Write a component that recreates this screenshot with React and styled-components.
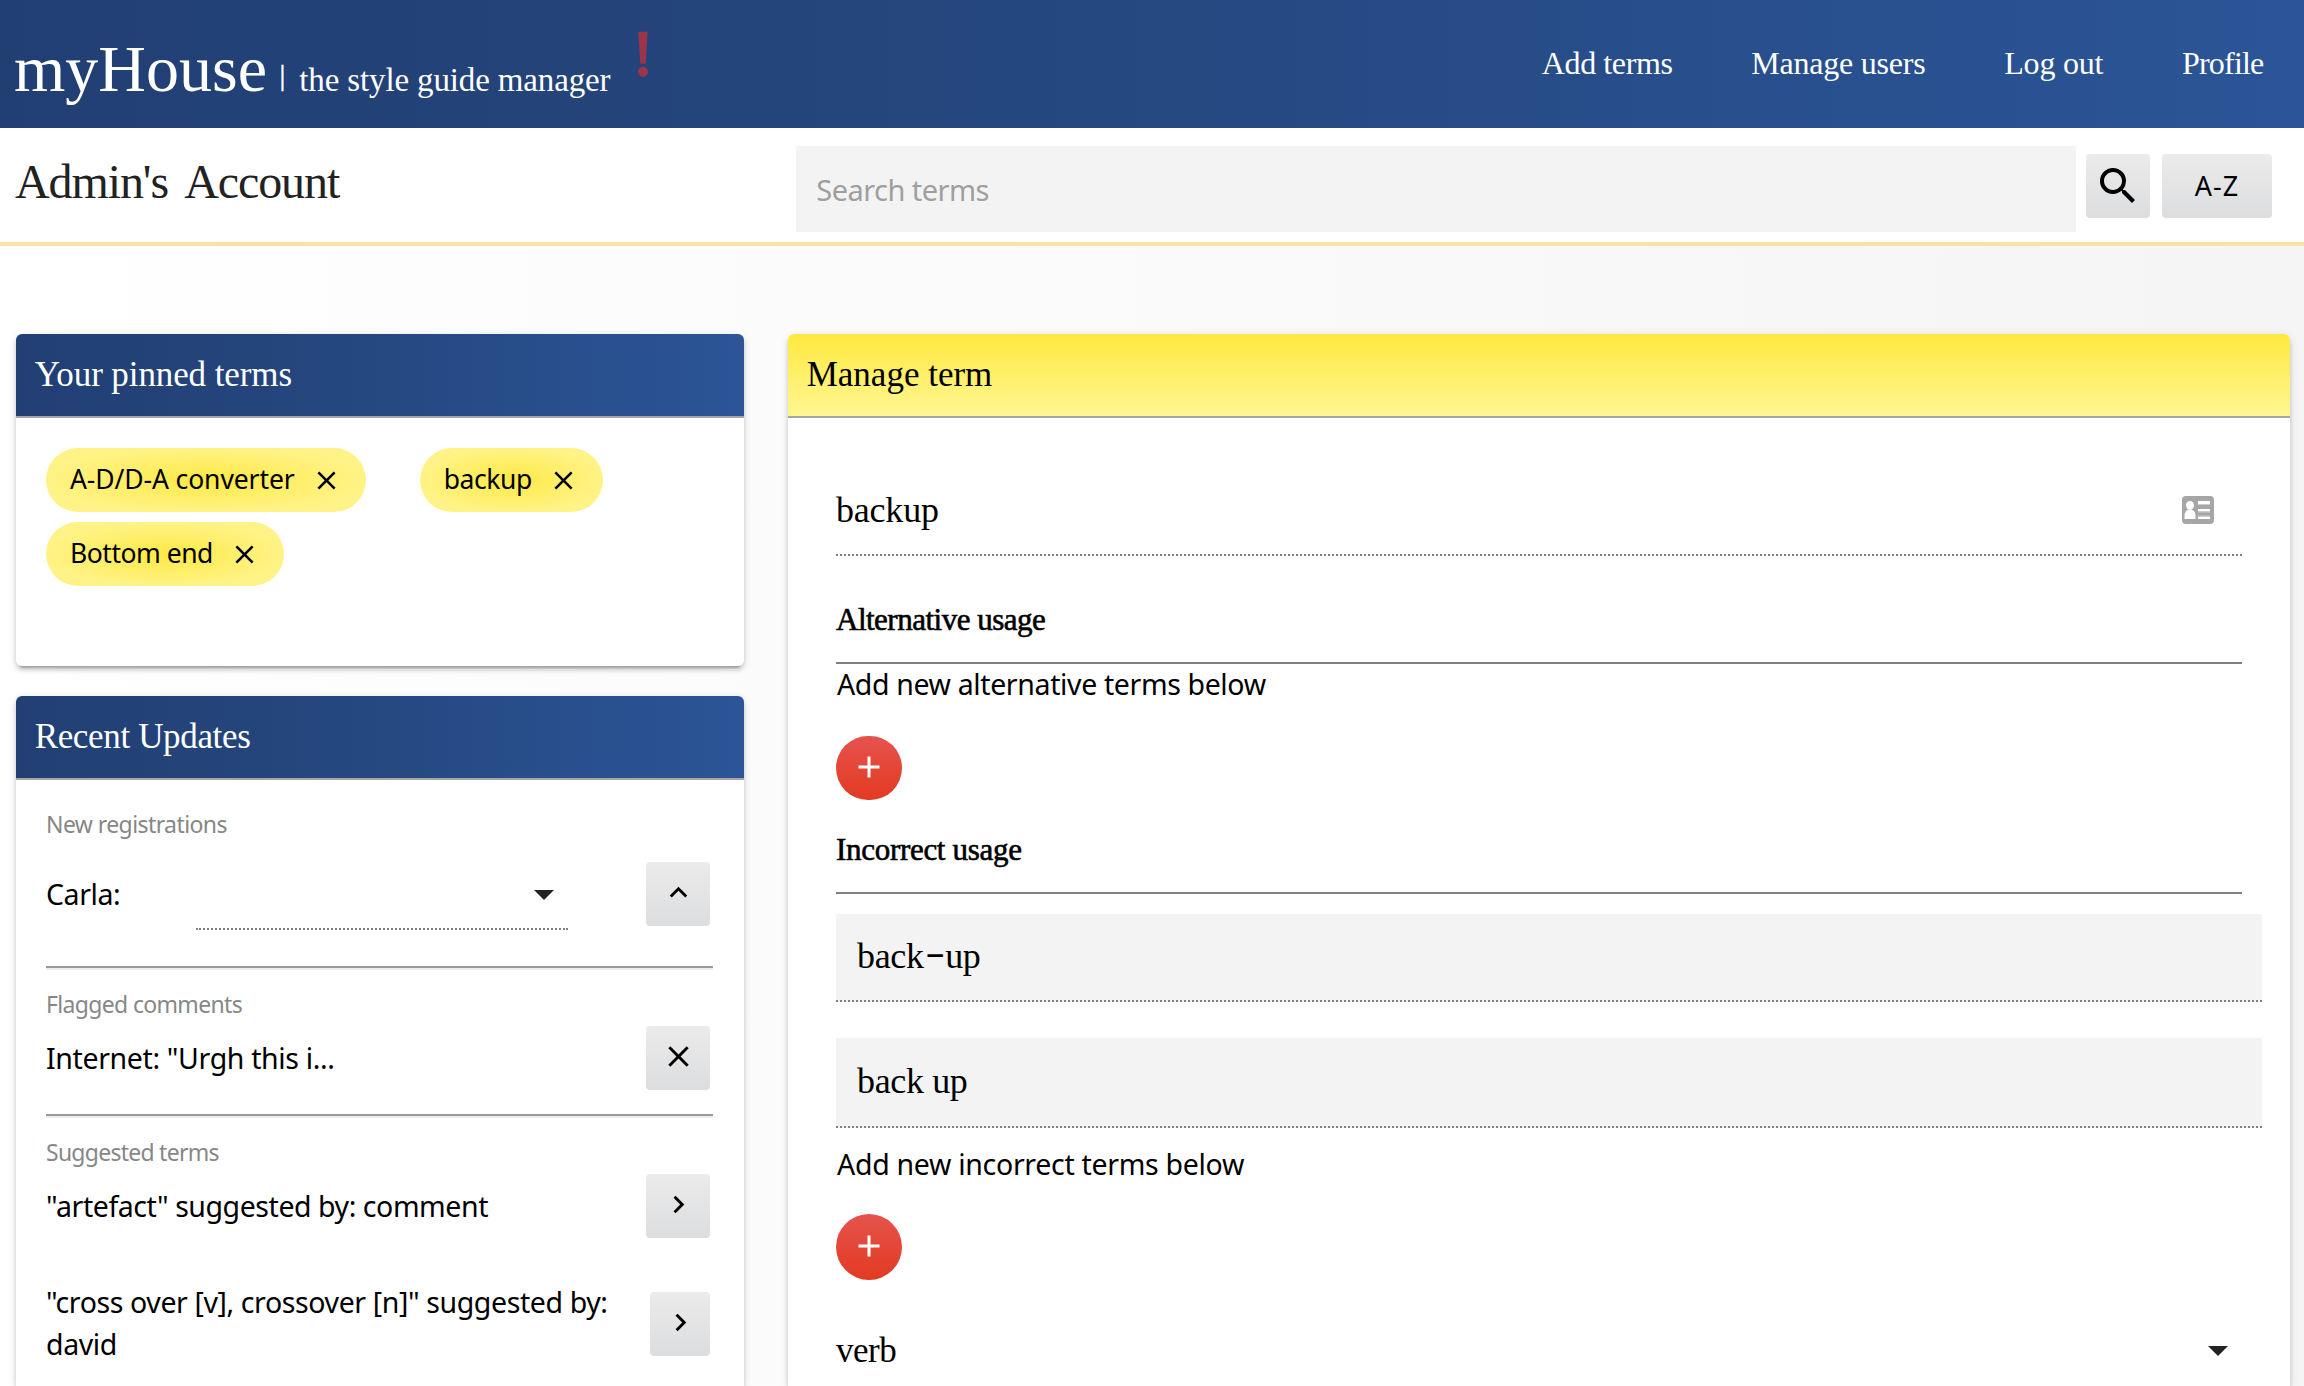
import React from "react";
import styled, { createGlobalStyle } from "styled-components";
import {
  MdAdd,
  MdClose,
  MdKeyboardArrowRight,
  MdKeyboardArrowUp,
  MdSearch,
} from "react-icons/md";

const serif = `"Liberation Serif", "Times New Roman", serif`;
const sans = `"Noto Sans", "Open Sans", sans-serif`;
const blue = "linear-gradient(to right, #213f73, #25477f 45%, #2b5597)";
const shadow =
  "0 6px 2px -4px rgba(0,0,0,.2), 0 4px 4px 0 rgba(0,0,0,.14), 0 2px 10px 0 rgba(0,0,0,.12)";

const GlobalStyle = createGlobalStyle`
  *, *::before, *::after { box-sizing: border-box; }
  body { margin: 0; background: #fff; overflow: hidden; }
`;

const Page = styled.div`
  display: flex;
  flex-direction: column;
  width: 100%;
  height: 1386px;
  overflow: hidden;
  color: #000;
  font-family: ${sans};
  font-weight: 400;
`;

/* ---------- top bar ---------- */

const TopBar = styled.header`
  flex: none;
  display: flex;
  align-items: flex-start;
  height: 128px;
  padding: 0 40.5px 0 14px;
  background: ${blue};
  color: #fff;
  font-family: ${serif};
`;

const Brand = styled.div`
  display: flex;
  align-items: baseline;
  padding-top: 29px;
  white-space: nowrap;
`;

const Logo = styled.span`
  font-size: 66px;
  line-height: 80px;
  letter-spacing: 0;
`;

const Divider = styled.span`
  margin: 0 14px 0 12.5px;
  font-size: 29px;
  line-height: 40px;
  transform: translateY(-6px);
  -webkit-text-stroke: 0.5px #fff;
`;

const Tagline = styled.span`
  font-size: 33px;
  line-height: 40px;
  letter-spacing: -0.14px;
`;

const Alert = styled.span`
  margin-left: 22px;
  padding-top: 14px;
  color: #9b3549;
  font-size: 63px;
  line-height: 80px;
  -webkit-text-stroke: 2.5px #9b3549;
`;

const Nav = styled.nav`
  display: flex;
  gap: 78.7px;
  margin-left: auto;
  font-size: 32px;
  line-height: 126px;
`;

const NavLink = styled.a`
  letter-spacing: ${(p) => p.$track}px;
  white-space: nowrap;
`;

/* ---------- account / search bar ---------- */

const SubBar = styled.div`
  flex: none;
  display: flex;
  align-items: flex-start;
  height: 118px;
  padding: 0 32px 0 15px;
  background: #fff;
  border-bottom: 4px solid #f8e3a2;
`;

const AccountTitle = styled.h1`
  width: 781px;
  margin: 0;
  color: #222;
  font: 400 48px/108px ${serif};
  letter-spacing: -1.1px;
  word-spacing: 8px;
`;

const SearchBox = styled.div`
  flex: 1;
  height: 86px;
  margin: 18px 10px 0 0;
  padding: 1px 0 0 20.3px;
  background: #f3f3f3;
  color: #9f9f9f;
  font-size: 29px;
  line-height: 86px;
  letter-spacing: -0.55px;
`;

const GreyButton = styled.button`
  flex: none;
  display: flex;
  align-items: center;
  justify-content: center;
  width: ${(p) => p.$width || 64}px;
  height: 64px;
  padding: 0 0 ${(p) => p.$lift || 0}px;
  border: 0;
  border-radius: 4px;
  background: linear-gradient(#ebebeb, #dcdddf);
  color: #000;
  font: 400 27px/60px ${sans};
  letter-spacing: 1px;
`;

const SearchActions = styled.div`
  display: flex;
  gap: 12px;
  padding-top: 26px;
`;

/* ---------- cards ---------- */

const Content = styled.main`
  flex: 1;
  display: flex;
  align-items: stretch;
  gap: 44px;
  min-height: 0;
  padding: 88px 14px 0 16px;
  background: linear-gradient(to right, #fff, #f5f5f5);
`;

const SideColumn = styled.div`
  flex: none;
  display: flex;
  flex-direction: column;
  gap: 30px;
  width: 728px;
`;

const Card = styled.section`
  flex: ${(p) => (p.$height ? "none" : 1)};
  min-width: 0;
  height: ${(p) => (p.$height ? `${p.$height}px` : "auto")};
  border-radius: ${(p) => (p.$height ? "6px" : "6px 6px 0 0")};
  background: #fff;
  box-shadow: ${shadow};
`;

const CardHeader = styled.h2`
  height: 84px;
  margin: 0;
  padding-left: 18.7px;
  border-bottom: 2px solid #a6a6a6;
  border-radius: 6px 6px 0 0;
  background: ${(p) =>
    p.$yellow ? "linear-gradient(#ffe93e, #fff693)" : blue};
  color: ${(p) => (p.$yellow ? "#000" : "#fff")};
  font: 400 35px/82px ${serif};
  letter-spacing: ${(p) => p.$track || 0}px;
`;

const Chips = styled.div`
  display: flex;
  flex-wrap: wrap;
  gap: 10px 54px;
  padding: 30px;
`;

const Chip = styled.div`
  display: flex;
  align-items: center;
  height: 64px;
  padding: 0 23.5px 0 24px;
  border-radius: 32px;
  background: radial-gradient(#fde945, #fff387 72%);
  font-size: 26.5px;
  letter-spacing: ${(p) => p.$track}px;
`;

const ChipText = styled.span`
  margin-right: 16.500px;
  padding-bottom: 2.5px;
`;

/* ---------- recent updates ---------- */

const Updates = styled.div`
  padding: 30px 30px 0;
`;

const Label = styled.div`
  height: 28px;
  margin-top: ${(p) => p.$top || 0}px;
  color: #878787;
  font-size: 23px;
  line-height: 28px;
  letter-spacing: ${(p) => p.$track || -0.58}px;
`;

const Rule = styled.hr`
  height: 4px;
  margin: 0 1px 0 0;
  border: 0;
  border-top: 2px solid #9a9a9a;
  background: #eee;
`;

const UpdateRow = styled.div`
  display: flex;
  align-items: ${(p) => (p.$tall ? "center" : "flex-start")};
  justify-content: space-between;
  height: ${(p) => p.$height || 64}px;
  margin: ${(p) => p.$top}px 4px ${(p) => p.$bottom || 0}px 0;
`;

const UpdateText = styled.span`
  align-self: flex-start;
  width: ${(p) => (p.$width ? `${p.$width}px` : "auto")};
  font-size: 28.5px;
  line-height: ${(p) => (p.$tall ? 42 : 64)}px;
  letter-spacing: ${(p) => p.$track || -0.4}px;
`;

const RoleSelect = styled.div`
  display: flex;
  align-items: center;
  justify-content: flex-end;
  width: 372px;
  height: 68px;
  margin-right: 78px;
  padding: 0 14px 0 0;
  border-bottom: 2px dotted #808080;
`;

const Caret = styled.i`
  width: 0;
  height: 0;
  border: solid transparent;
  border-width: 10px 10px 0;
  border-top-color: #222;
`;

/* ---------- term form ---------- */

const Form = styled.div`
  padding: 52px 48px 0;
`;

const TermInput = styled.div`
  display: flex;
  align-items: flex-start;
  justify-content: space-between;
  height: 86px;
  padding-right: 28px;
  border-bottom: 2px dotted #808080;
  font: 400 36px/81px ${serif};
  letter-spacing: -0.2px;
`;

const CardIcon = styled.svg`
  margin-top: 26px;
`;

const FieldTitle = styled.h3`
  height: 68px;
  margin: ${(p) => p.$top}px 0 0;
  border-bottom: 2px solid #808080;
  font: 400 31px/48px ${serif};
  letter-spacing: ${(p) => p.$track}px;
  -webkit-text-stroke: 0.6px #000;
`;

const Hint = styled.p`
  margin: ${(p) => p.$top || 0}px 0 0;
  padding-left: 1px;
  font-size: 28.5px;
  line-height: 40px;
  letter-spacing: ${(p) => p.$track}px;
`;

const AddButton = styled.button`
  display: flex;
  align-items: center;
  justify-content: center;
  width: 66px;
  height: ${(p) => p.$height}px;
  margin-top: ${(p) => p.$top}px;
  padding: 0 0 3px;
  border: 0;
  border-radius: 33px;
  background: linear-gradient(#e6534d, #e23a22);
  color: #fff;
`;

const TermField = styled.div`
  width: 1426px;
  height: ${(p) => p.$height}px;
  margin-top: ${(p) => p.$top}px;
  padding-left: 21px;
  background: #f3f3f3;
  border-bottom: 2px dotted #808080;
  font: 400 36px/${(p) => p.$height - 3}px ${serif};
  letter-spacing: -0.35px;
`;

const WideHyphen = styled.span`
  display: inline-block;
  margin: 0 5px;
  transform: translateY(-4px) scaleX(1.65);
`;

const TypeSelect = styled.div`
  display: flex;
  align-items: center;
  justify-content: space-between;
  height: 80px;
  margin-top: 31px;
  padding-right: 14px;
  font: 400 35px/80px ${serif};
  letter-spacing: -0.5px;
`;

function ContactCardIcon() {
  return (
    <CardIcon width="32" height="28" viewBox="0 0 32 28">
      <rect width="32" height="28" rx="4" fill="#a6a6a6" />
      <ellipse cx="8" cy="9.3" rx="4" ry="4.4" fill="#fff" />
      <path d="M2.5 23v-3c0-4 2-6.5 5.5-6.5s5.5 2.5 5.5 6.5v3z" fill="#fff" />
      <path d="M16 5h12v3H16zM16 13h12v2.5H16zM16 20.5h12V23H16z" fill="#fff" />
      <path d="M16 8h12v1H16zM16 15.5h12v1H16zM16 19.5h12v1H16z" fill="#ccc" />
    </CardIcon>
  );
}

export default function App() {
  return (
    <Page>
      <GlobalStyle />
      <TopBar>
        <Brand>
          <Logo>myHouse</Logo>
          <Divider>|</Divider>
          <Tagline>the style guide manager</Tagline>
        </Brand>
        <Alert>!</Alert>
        <Nav>
          <NavLink $track={-0.4}>Add terms</NavLink>
          <NavLink $track={-0.2}>Manage users</NavLink>
          <NavLink $track={-0.2}>Log out</NavLink>
          <NavLink $track={-0.8}>Profile</NavLink>
        </Nav>
      </TopBar>

      <SubBar>
        <AccountTitle>Admin's Account</AccountTitle>
        <SearchBox>Search terms</SearchBox>
        <SearchActions>
          <GreyButton>
            <MdSearch size={48} />
          </GreyButton>
          <GreyButton $width={110} $lift={1}>
            A-Z
          </GreyButton>
        </SearchActions>
      </SubBar>

      <Content>
        <SideColumn>
          <Card $height={332}>
            <CardHeader $track={-0.1}>Your pinned terms</CardHeader>
            <Chips>
              <Chip $track={-0.1}>
                <ChipText>A-D/D-A converter</ChipText>
                <MdClose size={31} />
              </Chip>
              <Chip $track={-0.4}>
                <ChipText>backup</ChipText>
                <MdClose size={31} />
              </Chip>
              <Chip $track={-0.48}>
                <ChipText>Bottom end</ChipText>
                <MdClose size={31} />
              </Chip>
            </Chips>
          </Card>

          <Card>
            <CardHeader $track={-0.35}>Recent Updates</CardHeader>
            <Updates>
              <Label>New registrations</Label>
              <UpdateRow $top={24} $bottom={40}>
                <UpdateText $width={150}>Carla:</UpdateText>
                <RoleSelect>
                  <Caret />
                </RoleSelect>
                <GreyButton $lift={3}>
                  <MdKeyboardArrowUp size={35} />
                </GreyButton>
              </UpdateRow>
              <Rule />

              <Label $top={20} $track={-0.66}>
                Flagged comments
              </Label>
              <UpdateRow $top={8} $bottom={24}>
                <UpdateText $track={-0.36}>Internet: "Urgh this i...</UpdateText>
                <GreyButton $lift={3}>
                  <MdClose size={35} />
                </GreyButton>
              </UpdateRow>
              <Rule />

              <Label $top={20} $track={-0.74}>
                Suggested terms
              </Label>
              <UpdateRow $top={8}>
                <UpdateText $track={-0.44}>
                  "artefact" suggested by: comment
                </UpdateText>
                <GreyButton $lift={3}>
                  <MdKeyboardArrowRight size={35} />
                </GreyButton>
              </UpdateRow>
              <UpdateRow $top={43} $height={86} $tall>
                <UpdateText $tall $width={580} $track={-0.39}>
                  "cross over [v], crossover [n]" suggested by: david
                </UpdateText>
                <GreyButton $width={60} $lift={3}>
                  <MdKeyboardArrowRight size={35} />
                </GreyButton>
              </UpdateRow>
            </Updates>
          </Card>
        </SideColumn>

        <Card>
          <CardHeader $yellow>Manage term</CardHeader>
          <Form>
            <TermInput>
              backup
              <ContactCardIcon />
            </TermInput>

            <FieldTitle $top={40} $track={-0.5}>
              Alternative usage
            </FieldTitle>
            <Hint $track={-0.37}>Add new alternative terms below</Hint>
            <AddButton $top={32} $height={64}>
              <MdAdd size={36} />
            </AddButton>

            <FieldTitle $top={26} $track={-0.3}>
              Incorrect usage
            </FieldTitle>
            <TermField $top={20} $height={88}>
              back<WideHyphen>-</WideHyphen>up
            </TermField>
            <TermField $top={36} $height={90}>
              back up
            </TermField>
            <Hint $top={16} $track={-0.3}>
              Add new incorrect terms below
            </Hint>
            <AddButton $top={30} $height={66}>
              <MdAdd size={36} />
            </AddButton>

            <TypeSelect>
              verb
              <Caret />
            </TypeSelect>
          </Form>
        </Card>
      </Content>
    </Page>
  );
}
